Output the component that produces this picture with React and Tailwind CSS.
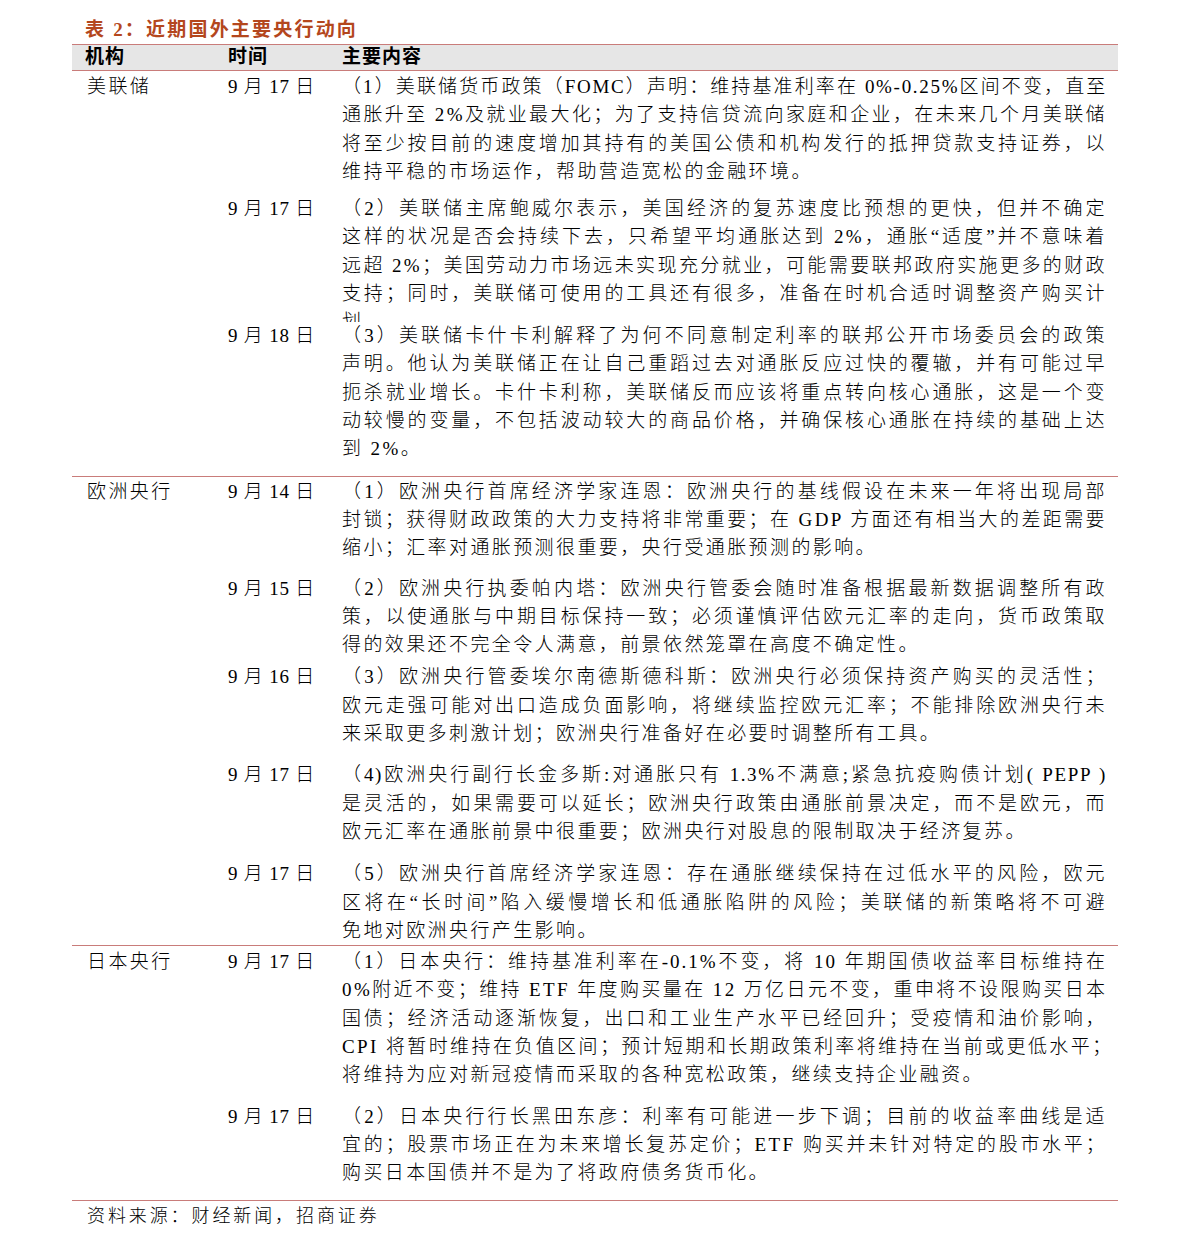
import React from "react";

const groups = [
  {
    name: "美联储",
    cls: "pt-[2px] pb-[12px]",
    entries: [
      {
        date: "9 月 17 日",
        cls: "",
        lines: [
          ["（1）美联储货币政策（FOMC）声明：维持基准利率在 0%-0.25%区间不变，直至", "tracking-[1.7px]"],
          "通胀升至 2%及就业最大化；为了支持信贷流向家庭和企业，在未来几个月美联储",
          "将至少按目前的速度增加其持有的美国公债和机构发行的抵押贷款支持证券，以",
          "维持平稳的市场运作，帮助营造宽松的金融环境。",
        ],
      },
      {
        date: "9 月 17 日",
        cls: "mt-[9px] h-[127px] overflow-hidden",
        lines: [
          "（2）美联储主席鲍威尔表示，美国经济的复苏速度比预想的更快，但并不确定",
          "这样的状况是否会持续下去，只希望平均通胀达到 2%，通胀“适度”并不意味着",
          "远超 2%；美国劳动力市场远未实现充分就业，可能需要联邦政府实施更多的财政",
          "支持；同时，美联储可使用的工具还有很多，准备在时机合适时调整资产购买计",
          "划。",
        ],
      },
      {
        date: "9 月 18 日",
        cls: "",
        lines: [
          "（3）美联储卡什卡利解释了为何不同意制定利率的联邦公开市场委员会的政策",
          "声明。他认为美联储正在让自己重蹈过去对通胀反应过快的覆辙，并有可能过早",
          "扼杀就业增长。卡什卡利称，美联储反而应该将重点转向核心通胀，这是一个变",
          "动较慢的变量，不包括波动较大的商品价格，并确保核心通胀在持续的基础上达",
          "到 2%。",
        ],
      },
    ],
  },
  {
    name: "欧洲央行",
    cls: "pt-[1px]",
    entries: [
      {
        date: "9 月 14 日",
        cls: "",
        lines: [
          "（1）欧洲央行首席经济学家连恩：欧洲央行的基线假设在未来一年将出现局部",
          "封锁；获得财政政策的大力支持将非常重要；在 GDP 方面还有相当大的差距需要",
          "缩小；汇率对通胀预测很重要，央行受通胀预测的影响。",
        ],
      },
      {
        date: "9 月 15 日",
        cls: "mt-[12px]",
        lines: [
          "（2）欧洲央行执委帕内塔：欧洲央行管委会随时准备根据最新数据调整所有政",
          "策，以使通胀与中期目标保持一致；必须谨慎评估欧元汇率的走向，货币政策取",
          "得的效果还不完全令人满意，前景依然笼罩在高度不确定性。",
        ],
      },
      {
        date: "9 月 16 日",
        cls: "mt-[4px]",
        lines: [
          "（3）欧洲央行管委埃尔南德斯德科斯：欧洲央行必须保持资产购买的灵活性；",
          "欧元走强可能对出口造成负面影响，将继续监控欧元汇率；不能排除欧洲央行未",
          "来采取更多刺激计划；欧洲央行准备好在必要时调整所有工具。",
        ],
      },
      {
        date: "9 月 17 日",
        cls: "mt-[13px]",
        lines: [
          ["（4)欧洲央行副行长金多斯:对通胀只有 1.3%不满意;紧急抗疫购债计划( PEPP )", "tracking-[1.6px]"],
          "是灵活的，如果需要可以延长；欧洲央行政策由通胀前景决定，而不是欧元，而",
          "欧元汇率在通胀前景中很重要；欧洲央行对股息的限制取决于经济复苏。",
        ],
      },
      {
        date: "9 月 17 日",
        cls: "mt-[14px]",
        lines: [
          "（5）欧洲央行首席经济学家连恩：存在通胀继续保持在过低水平的风险，欧元",
          "区将在“长时间”陷入缓慢增长和低通胀陷阱的风险；美联储的新策略将不可避",
          "免地对欧洲央行产生影响。",
        ],
      },
    ],
  },
  {
    name: "日本央行",
    cls: "pt-[2px] pb-[12px]",
    entries: [
      {
        date: "9 月 17 日",
        cls: "",
        lines: [
          ["（1）日本央行：维持基准利率在-0.1%不变，将 10 年期国债收益率目标维持在", "tracking-[2px]"],
          "0%附近不变；维持 ETF 年度购买量在 12 万亿日元不变，重申将不设限购买日本",
          "国债；经济活动逐渐恢复，出口和工业生产水平已经回升；受疫情和油价影响，",
          "CPI 将暂时维持在负值区间；预计短期和长期政策利率将维持在当前或更低水平；",
          "将维持为应对新冠疫情而采取的各种宽松政策，继续支持企业融资。",
        ],
      },
      {
        date: "9 月 17 日",
        cls: "mt-[13px]",
        lines: [
          "（2）日本央行行长黑田东彦：利率有可能进一步下调；目前的收益率曲线是适",
          "宜的；股票市场正在为未来增长复苏定价；ETF 购买并未针对特定的股市水平；",
          "购买日本国债并不是为了将政府债务货币化。",
        ],
      },
    ],
  },
];

function Entry({ e }) {
  return (
    <div className={"flex leading-[28.3px] " + e.cls}>
      <div className="w-[114px] shrink-0 tracking-[0.8px]">{e.date}</div>
      <div className="w-[776px] shrink-0 pr-[11px]">
        {e.lines.map((raw, i) => {
          const text = Array.isArray(raw) ? raw[0] : raw;
          const extra = Array.isArray(raw) ? " " + raw[1] : "";
          return i < e.lines.length - 1 ? (
            <div key={i} className={"whitespace-nowrap text-justify [text-align-last:justify]" + extra}>
              {text}
            </div>
          ) : (
            <div key={i} className={"whitespace-nowrap" + extra}>
              {text}
            </div>
          );
        })}
      </div>
    </div>
  );
}

export default function App() {
  return (
    <div
      lang="zh-CN"
      className="w-[1191px] h-[1245px] bg-white text-black font-['Liberation_Serif','Noto_Sans_CJK_SC',serif] pl-[72px]"
    >
      <div className="h-[44px] pt-[17px] pl-[13px] text-[19px] leading-[26px] font-bold text-[#b4471d] tracking-[2.2px]">
        表 2：近期国外主要央行动向
      </div>
      <div className="w-[1046px]">
        <div className="flex h-[27px] items-center border-y border-[#c97c7a] bg-[#e6e6e6] text-[19px] font-bold tracking-[1px]">
          <div className="w-[156px] pl-[13px]">机构</div>
          <div className="w-[114px]">时间</div>
          <div>主要内容</div>
        </div>
        {groups.map((g, gi) => (
          <div
            key={gi}
            className={"flex border-b border-[#c97c7a] text-[19px] font-light tracking-[2.4px] " + g.cls}
          >
            <div className="w-[156px] shrink-0 pl-[15px] leading-[28.3px]">{g.name}</div>
            <div className="flex flex-col">
              {g.entries.map((e, ei) => (
                <Entry key={ei} e={e} />
              ))}
            </div>
          </div>
        ))}
        <div className="pl-[15px] pt-[1px] text-[18px] leading-[28px] font-light tracking-[2.9px]">
          资料来源：财经新闻，招商证券
        </div>
      </div>
    </div>
  );
}
